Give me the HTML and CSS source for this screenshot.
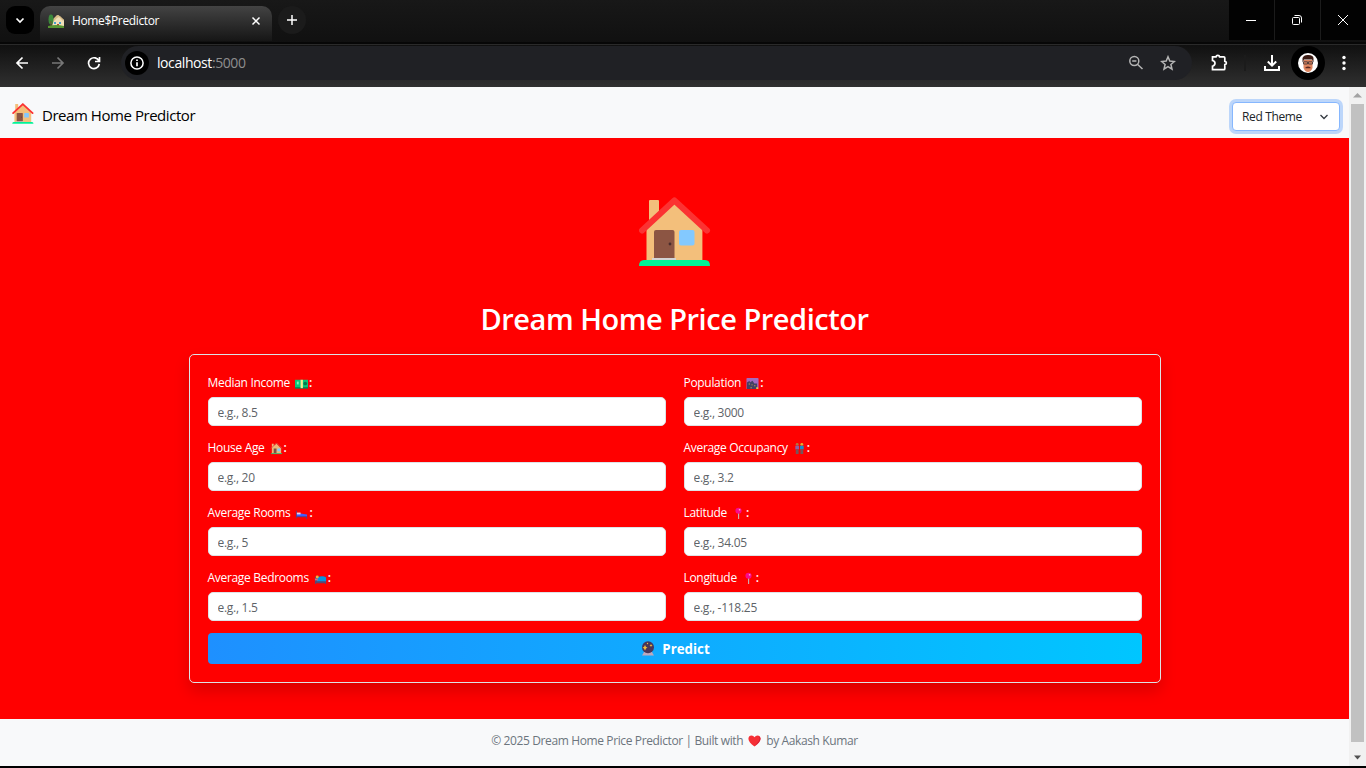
FILE: index.html
```html
<!DOCTYPE html>
<html lang="en">
<head>
<meta charset="utf-8">
<title>Home$Predictor</title>
<link rel="stylesheet" href="styles.css">
</head>
<body>
<svg class="defs" aria-hidden="true">
  <symbol id="house" viewBox="0 0 72 70">
    <path d="M10 26V4q0-1 1-1h8q1 0 1 1v16zM7.500 31L35.400 5l28 26v33H7.500z" fill="#f3bf7b"/>
    <path d="M3 33.500L35.400 3.500 68 33.500" fill="none" stroke="#fb3232" stroke-width="6" stroke-linecap="round" stroke-linejoin="round"/>
    <rect x="15" y="33" width="20.500" height="30" rx="2" fill="#8c5543"/>
    <circle cx="31" cy="47" r="1.400" fill="#4a2c2c"/>
    <rect x="40" y="33" width="15.500" height="15.500" rx="2" fill="#83c9ff"/>
    <path d="M13 61h24v3H13z" fill="#d3d3d3"/>
    <path d="M0 69q0-6 5-6h61q5 0 5 6z" fill="#00f397"/>
  </symbol>
  <symbol id="pin" viewBox="0 0 14 14">
    <path d="M6.500 6h1.200v7h-1.200z" fill="#c9b0b5"/><circle cx="7" cy="4" r="3.300" fill="#f70a8d"/><circle cx="8.200" cy="3" r=".9" fill="#ffa8d8"/>
  </symbol>
</svg>

<header class="chrome">
  <div class="tabstrip">
    <button class="tab-search"><svg width="10" height="7" viewBox="0 0 10 7"><path d="M1.500 1.500L5 5l3.500-3.500" class="ln w17"/></svg></button>
    <div class="tab">
      <svg width="17" height="16" viewBox="0 0 17 16"><path d="M5 7l5-5 6 5v7H4z" fill="#f0dfb8"/><path d="M4 7l5-5 3 1 4 4-1 1-4-4-2 1-3 3z" fill="#d9bd88"/><path d="M6 9h2v2H6zm5 0h2v2h-2z" fill="#4a9cc9"/><path d="M9 11h2v3H9z" fill="#a54b35"/><ellipse cx="3" cy="6.500" rx="2.500" ry="5" fill="#3c8a3c"/><path d="M2.500 8h1v6h-1z" fill="#77502d"/><path d="M0 13q8-2 16 0v2H0z" fill="#579532"/></svg>
      <span class="tab-title">Home$Predictor</span>
      <svg width="10" height="10" viewBox="0 0 10 10"><path d="M1.500 1.500l7 7m0-7l-7 7" class="ln w15"/></svg>
    </div>
    <button class="new-tab"><svg width="12" height="12" viewBox="0 0 12 12"><path d="M6 1v10M1 6h10" class="ln w15"/></svg></button>
    <div class="window-controls">
      <span><svg width="12" height="12" viewBox="0 0 12 12"><path d="M1 6.500h10" class="ln w1"/></svg></span>
      <span><svg width="12" height="12" viewBox="0 0 12 12"><rect x="1.500" y="3.500" width="7" height="7" rx="1" class="ln w1"/><path d="M3.500 1.500H8Q10.500 1.500 10.500 4v4.500" class="ln w1"/></svg></span>
      <span><svg width="12" height="12" viewBox="0 0 12 12"><path d="M1 1l10 10M11 1L1 11" class="ln w1"/></svg></span>
    </div>
  </div>
  <div class="toolbar">
    <svg width="14" height="14" viewBox="0 0 14 14"><path d="M13 7H2m5.500-5.500L2 7l5.500 5.500" class="ln w17"/></svg>
    <svg class="dim" width="14" height="14" viewBox="0 0 14 14"><path d="M1 7h11M6.500 1.500L12 7l-5.500 5.500" class="ln w17"/></svg>
    <svg width="14" height="14" viewBox="0 0 14 14"><path d="M12 5.200A5.400 5.400 0 1 0 12.300 8M12.500 1v4.500H8" class="ln w17"/></svg>
    <div class="address">
      <span class="info"><svg width="14" height="14" viewBox="0 0 14 14"><circle cx="7" cy="7" r="6.100" class="ln w15"/><path d="M7 6.300v4M7 3.500v1.500" class="ln w17"/></svg></span>
      <span class="url">localhost<i>:5000</i></span>
      <svg class="grey zoomed" width="16" height="16" viewBox="0 0 16 16"><circle cx="6.300" cy="6" r="4.500" class="ln w15"/><path d="M4.200 6h4.200M9.700 9.500L14.500 14" class="ln w15"/></svg>
      <svg class="grey" width="16" height="16" viewBox="0 0 16 16"><path d="M8 1.800l1.800 4.300 4.600.4-3.500 3 1.100 4.600L8 11.600l-4 2.500 1.100-4.600-3.500-3 4.600-.4z" class="ln w15"/></svg>
    </div>
    <svg class="ext" width="18" height="18" viewBox="0 0 18 18"><path d="M2.500 2.800H6q.2-1.400 1.800-1.400t1.800 1.400h4.200q1 0 1 1V7.300q1.600.1 1.600 1.600t-1.600 1.600v4.200q0 1-1 1H2.500v-3.500Q5 11.500 5 9.300T2.500 6.500z" class="ln w17"/></svg>
    <span class="divider"></span>
    <svg class="download" width="18" height="18" viewBox="0 0 18 18"><path d="M9 1v10.500M4.800 7.500L9 11.700l4.200-4.200M2 12v4h14v-4" class="ln w2"/></svg>
    <span class="avatar"><svg width="20" height="20" viewBox="0 0 20 20"><circle cx="10" cy="10" r="10" fill="#fff"/><path d="M5.500 7h9v8q-1.500 4-4.500 4t-4.500-4z" fill="#e08660"/><path d="M4.500 9.500V5q1.500-3.500 6-3 5 0 5 3.500v4l-1.500-3H6z" fill="#3c1c14"/><path d="M5.500 8.800h4v2.200h-4zm5 0h4v2.200h-4z" fill="none" stroke="#4b3a38" stroke-width=".9"/><path d="M7.500 14.300q2.500-1.500 5 0v.9h-5z" fill="#5a281f"/></svg></span>
    <svg class="more" width="4" height="16" viewBox="0 0 4 16"><circle cx="2" cy="2.500" r="1.700"/><circle cx="2" cy="8" r="1.700"/><circle cx="2" cy="13.500" r="1.700"/></svg>
  </div>
</header>

<div class="viewport">
  <div class="page">
    <nav class="navbar">
      <svg class="brand-icon" width="22" height="21"><use href="#house"/></svg>
      <span class="brand">Dream Home Predictor</span>
      <div class="select"><span>Red Theme</span><svg width="10" height="8" viewBox="0 0 10 8"><path d="M1.500 2L5 5.500 8.500 2"/></svg></div>
    </nav>
    <main>
      <svg class="hero" width="72" height="70"><use href="#house"/></svg>
      <h1>Dream Home Price Predictor</h1>
      <form class="card">
        <div class="field">
          <label><span>Median Income</span><svg class="em" viewBox="0 0 14 14"><path d="M0 3h14v9H0z" fill="#08ca78"/><path d="M0 11h14v1.500H0z" fill="#087e52"/><path d="M6 3h2.500v9H6z" fill="#f5ed91"/><circle cx="11" cy="7" r="2" fill="#07784e"/><path d="M2 5h2v3H2z" fill="#80f5bc"/></svg><b>:</b></label>
          <input type="text" placeholder="e.g., 8.5">
        </div>
        <div class="field">
          <label><span>Population</span><svg class="em" viewBox="0 0 14 14"><rect x=".5" y="1" width="13" height="12" rx="1" fill="#a36bc0"/><path d="M1 6l3-2v2l3-2 2 3h3v6H1z" fill="#434165"/><path d="M3 7h1v1H3zm3 1h1v1H6zm3 1h1v1H9zM5 11h1v1H5zm6 0h2v2h-2z" fill="#f0c94b"/></svg><b>:</b></label>
          <input type="text" placeholder="e.g., 3000">
        </div>
        <div class="field">
          <label><span>House Age</span><svg class="em" viewBox="0 0 14 14"><path d="M2 6V2h2v2l3-2 5 5v6H2z" fill="#edb879"/><path d="M1 7l6-6 6 6" fill="none" stroke="#db524b"/><path d="M4 7h3v5H4z" fill="#805044"/><path d="M8 7h3v3H8z" fill="#82cbff"/><path d="M1 12h12v1H1z" fill="#39b56b"/></svg><b>:</b></label>
          <input type="text" placeholder="e.g., 20">
        </div>
        <div class="field">
          <label><span>Average Occupancy</span><svg class="em" viewBox="0 0 14 14"><circle cx="4.500" cy="2.500" r="1.500" fill="#b4763c"/><circle cx="9.500" cy="2.500" r="1.500" fill="#e6b12a"/><path d="M2.500 4h4v4h-4z" fill="#8d60a8"/><path d="M7.500 4h4v4h-4z" fill="#158dcb"/><path d="M3 8h3v5H3zm5 0h3v5H8z" fill="#75555b"/></svg><b>:</b></label>
          <input type="text" placeholder="e.g., 3.2">
        </div>
        <div class="field">
          <label><span>Average Rooms</span><svg class="em" viewBox="0 0 14 14"><path d="M1 4h1v4l11 1v4h-1v-2H2v1H1z" fill="#643d75"/><path d="M2 7h4l7 1v2H2z" fill="#405cff"/><path d="M2 6h4v2H2z" fill="#e8d1ee"/></svg><b>:</b></label>
          <input type="text" placeholder="e.g., 5">
        </div>
        <div class="field">
          <label><span>Latitude</span><svg class="em"><use href="#pin"/></svg><b>:</b></label>
          <input type="text" placeholder="e.g., 34.05">
        </div>
        <div class="field">
          <label><span>Average Bedrooms</span><svg class="em" viewBox="0 0 14 14"><path d="M1 5h12v8h-1v-1H2v1H1z" fill="#574773"/><path d="M4 6q5-3 9 0v4H3z" fill="#0795df"/><circle cx="3.500" cy="5.500" r="1.600" fill="#eeb53d"/><path d="M1 7h3v2H1z" fill="#d56c85"/></svg><b>:</b></label>
          <input type="text" placeholder="e.g., 1.5">
        </div>
        <div class="field">
          <label><span>Longitude</span><svg class="em"><use href="#pin"/></svg><b>:</b></label>
          <input type="text" placeholder="e.g., -118.25">
        </div>
        <button class="predict" type="button"><svg width="14" height="15" viewBox="0 0 14 15"><path d="M3 11h8l2 3.500H1z" fill="#bda8bd"/><circle cx="7" cy="6.200" r="6" fill="#493659"/><path d="M4 4l1 2 1.500.5L5 7.500 4 9.500 3 7.500 1.500 6.500 3 6zM10 3l.5 1 1 .5-1 .5-.5 1-.5-1-1-.5 1-.5z" fill="#f5bc3c"/><circle cx="6.500" cy="2.500" r=".7" fill="#f5bc3c"/></svg><span>Predict</span></button>
      </form>
    </main>
    <footer><span>© 2025 Dream Home Price Predictor | Built with</span><svg width="13" height="12" viewBox="0 0 13 12"><path d="M6.500 11.500Q.5 7.500.4 3.800.7.500 3.500.5q2 0 3 1.800 1-1.800 3-1.800 2.800 0 3.100 3.300-.1 3.700-6.100 7.700z" fill="#f52f35"/><path d="M10.500 1.500q2 2 0 5l-4 4.500q6-4 6-7.500-.3-2-2-2z" fill="#d01d3b"/></svg><span>by Aakash Kumar</span></footer>
  </div>
  <div class="scrollbar"><svg width="9" height="5" viewBox="0 0 9 5"><path d="M0 4.500L4.500 0 9 4.500z" fill="#a3a3a3"/></svg><div class="thumb"></div><svg width="9" height="5" viewBox="0 0 9 5"><path d="M1 .5h7L4.500 4.500z" fill="#505050"/></svg></div>
</div>
</body>
</html>
```

FILE: styles.css
```css
* { box-sizing: border-box; }
body { margin: 0; width: 1366px; height: 768px; overflow: hidden; background: #000; font: 12px/18px "Open Sans", "Noto Sans", sans-serif; display: flex; flex-direction: column; }
svg { display: block; flex: none; }
span { white-space: nowrap; }
.defs { width: 0; height: 0; position: absolute; }
button { border: 0; padding: 0; font: inherit; }

.chrome { height: 87px; flex: none; color: #fff; }
.ln { fill: none; stroke: currentColor; }
.w1 { stroke-width: 1; }
.w15 { stroke-width: 1.5; }
.w17 { stroke-width: 1.7; }
.w2 { stroke-width: 2; }
.tabstrip { height: 45px; display: flex; background: linear-gradient(#181818, #101010); border-bottom: 1px solid #2a2a2a; box-shadow: inset 0 -2px #070707; }
.tab-search { width: 28px; height: 28px; margin: 6px 6px 0; border-radius: 9px; background: #000; color: #fff; display: grid; place-items: center; }
.tab { width: 232px; height: 35px; margin-top: 6px; padding: 0 11px 6px 8px; border-radius: 10px 10px 0 0; background: linear-gradient(#434343, #161616); display: flex; align-items: center; }
.tab-title { flex: 1; margin-left: 7px; letter-spacing: -.36px; }
.new-tab { width: 28px; height: 28px; margin: 6px 0 0 6px; border-radius: 50%; background: #1b1b1b; color: #fff; display: grid; place-items: center; }
.window-controls { height: 40px; margin-left: auto; display: flex; gap: 1px; background: #1b1b1b; }
.window-controls span { width: 45px; padding-right: 2px; display: grid; place-items: center; background: #020202; }
.toolbar { height: 42px; padding: 0 20px 6px 15px; display: flex; align-items: center; background: linear-gradient(#101010, #303030); }
.toolbar > svg + svg { margin-left: 22px; }
.dim { color: #777; }
.address { width: 1071px; height: 34px; margin: 0 0 0 20px; padding: 0 16px 0 4px; border-radius: 17px; background: #202125; display: flex; align-items: center; flex: none; }
.info { width: 24px; height: 24px; border-radius: 50%; background: #000; display: grid; place-items: center; }
.url { margin-left: 8px; font-size: 14px; letter-spacing: -.42px; flex: 1; }
.url i { font-style: normal; color: #8e8e8e; }
.grey { color: #b5b5b5; }
.zoomed { margin-right: 16px; }
.ext { margin-left: 18px; }
.divider { width: 2px; height: 16px; margin-left: 16px; background: #1b1b1b; }
.download { margin-left: 17px; }
.avatar { width: 34px; height: 34px; margin-left: 10px; border-radius: 50%; background: #000; display: grid; place-items: center; }
.more { margin-left: 17px; fill: #fff; }

.viewport { display: flex; height: 679px; flex: none; }
.page { width: 1349px; display: flex; flex-direction: column; }
.navbar { height: 51px; padding: 0 9px 0 12px; background: #f8f9fa; display: flex; align-items: center; }
.brand-icon { margin-top: 2px; }
.brand { margin: 5px 0 0 8px; font-size: 15px; letter-spacing: -.45px; color: #000; }
.select { width: 108px; height: 29px; margin: 7px 0 0 auto; padding: 1px 10px 0 9px; border: 1px solid #86b7fe; border-radius: 4px; box-shadow: 0 0 0 3px #bcd6fa; background: #fff; color: #212529; display: flex; align-items: center; justify-content: space-between; letter-spacing: -.35px; }
.select span { padding-top: 1px; }
.select path { fill: none; stroke: #343a40; stroke-width: 1.3; }
main { height: 581px; background: #f00; color: #fff; display: flex; flex-direction: column; align-items: center; padding-top: 59px; }
h1 { margin: 34px 0 0; height: 36px; font-size: 29px; line-height: 36px; font-weight: 600; letter-spacing: -.47px; white-space: nowrap; }
.card { width: 972px; height: 329px; margin: 17px 0 0; padding: 17px 18px; border: 1px solid #dee2e6; border-radius: 5px; box-shadow: 0 8px 16px rgba(0,0,0,.15); display: grid; grid-template-columns: 458px 458px; column-gap: 18px; grid-auto-rows: 65px; align-content: start; }
.field { display: flex; flex-direction: column; }
label { height: 25px; padding-top: 2px; display: flex; font-weight: 500; letter-spacing: -.31px; }
label b { font-weight: 600; margin-left: 1px; }
.em { width: 13px; height: 13px; margin: 3px 0 0 5px; }
input { width: 458px; height: 29px; padding: 2px 9px 0; border: 1px solid #dee2e6; border-radius: 5px; background: #fff; font: 12px/18px "Open Sans", "Noto Sans", sans-serif; letter-spacing: -.28px; }
input::placeholder { color: #5e6368; opacity: 1; }
.predict { grid-column: 1 / 3; height: 31px; margin-top: 1px; border-radius: 4px; background: linear-gradient(90deg, #1e90ff, #00c6ff); color: #fff; display: flex; align-items: center; justify-content: center; gap: 7px; padding-left: 2px; font-size: 13.3px; font-weight: 700; }
footer { height: 47px; background: #f8f9fa; color: #6c757d; display: flex; align-items: center; justify-content: center; gap: 5px; padding-bottom: 3px; letter-spacing: -.38px; }
.scrollbar { width: 17px; background: #f1f1f1; display: flex; flex-direction: column; align-items: center; padding: 6px 0 6px; }
.thumb { width: 13px; height: 638px; margin: 6px 0 13px; background: #c1c1c1; }
```
